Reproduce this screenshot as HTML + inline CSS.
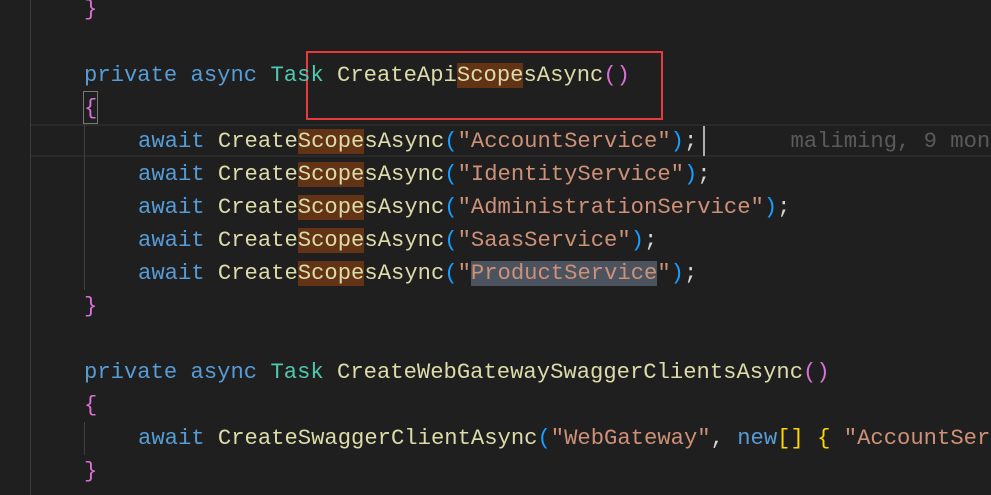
<!DOCTYPE html>
<html><head><meta charset="utf-8"><style>
html,body{margin:0;width:991px;height:495px;overflow:hidden}
body{background:#1f1f1f;position:relative;font-family:"Liberation Mono",monospace;font-size:22.2px;}
.wrap{position:absolute;left:0;top:0;width:991px;height:495px;overflow:hidden}
.l{position:absolute;left:0;height:33px;line-height:33px;white-space:pre;color:#d4d4d4;}
.k{color:#569cd6}.t{color:#4ec9b0}.f{color:#dcdcaa}.s{color:#ce9178}.p{color:#179fff}.m{color:#da70d6}.y{color:#ffd700}
.fh{background:#623315}.sel{background:#4b535e}
.g{position:absolute;background:#404040;width:1px}
</style></head><body><div class="wrap">
<div class="g" style="left:30px;top:0;height:495px;background:#3a3a3a"></div>
<div style="position:absolute;left:31px;right:0;top:124px;height:29px;border-top:2px solid #2a2a2a;border-bottom:2px solid #2a2a2a"></div>
<div class="g" style="left:84px;top:124px;height:166px"></div>
<div class="g" style="left:84px;top:422px;height:33px"></div>
<div style="position:absolute;left:83px;top:91px;width:13px;height:31px;border:1px solid #777"></div>
<div style="position:absolute;left:306px;top:51px;width:353px;height:65px;border:2px solid #e83a3a"></div>
<div style="position:absolute;left:703px;top:126px;width:2px;height:30px;background:#aeafad"></div>

<div class="l" style="top:-7px;left:84px"><span class="m">}</span></div>
<div class="l" style="top:59px;left:84px"><span class="k">private</span> <span class="k">async</span> <span class="t">Task</span> <span class="f">CreateApi<span class="fh">Scope</span>sAsync</span><span class="m">()</span></div>
<div class="l" style="top:92px;left:84px"><span class="m">{</span></div>
<div class="l" style="top:125px;left:138px"><span class="k">await</span> <span class="f">Create<span class="fh">Scope</span>sAsync</span><span class="p">(</span><span class="s">"AccountService"</span><span class="p">)</span>;       <span style="color:#5a5a5a">maliming, 9 mon</span></div>
<div class="l" style="top:158px;left:138px"><span class="k">await</span> <span class="f">Create<span class="fh">Scope</span>sAsync</span><span class="p">(</span><span class="s">"IdentityService"</span><span class="p">)</span>;</div>
<div class="l" style="top:191px;left:138px"><span class="k">await</span> <span class="f">Create<span class="fh">Scope</span>sAsync</span><span class="p">(</span><span class="s">"AdministrationService"</span><span class="p">)</span>;</div>
<div class="l" style="top:224px;left:138px"><span class="k">await</span> <span class="f">Create<span class="fh">Scope</span>sAsync</span><span class="p">(</span><span class="s">"SaasService"</span><span class="p">)</span>;</div>
<div class="l" style="top:257px;left:138px"><span class="k">await</span> <span class="f">Create<span class="fh">Scope</span>sAsync</span><span class="p">(</span><span class="s">"<span class="sel">ProductService</span>"</span><span class="p">)</span>;</div>
<div class="l" style="top:290px;left:84px"><span class="m">}</span></div>
<div class="l" style="top:356px;left:84px"><span class="k">private</span> <span class="k">async</span> <span class="t">Task</span> <span class="f">CreateWebGatewaySwaggerClientsAsync</span><span class="m">()</span></div>
<div class="l" style="top:389px;left:84px"><span class="m">{</span></div>
<div class="l" style="top:422px;left:138px"><span class="k">await</span> <span class="f">CreateSwaggerClientAsync</span><span class="p">(</span><span class="s">"WebGateway"</span>, <span class="k">new</span><span class="y">[]</span> <span class="y">{</span> <span class="s">"AccountSer</span></div>
<div class="l" style="top:455px;left:84px"><span class="m">}</span></div>
</div></body></html>
